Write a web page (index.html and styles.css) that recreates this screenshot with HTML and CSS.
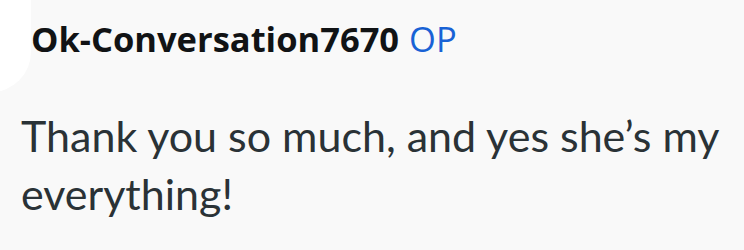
FILE: index.html
```html
<!DOCTYPE html>
<html>
<head><link rel="stylesheet" href="styles.css"></head>
<body>
<div class="comment">
  <div class="avatar"></div>
  <div class="header">
    <span class="author">Ok-Conversation7670</span>
    <span class="op">OP</span>
  </div>
  <p class="body">Thank you so much, and yes she’s my everything!</p>
</div>
</body>
</html>
```
FILE: styles.css
```css
html, body {
  margin: 0;
  background: #f9f9f9;
}
.comment {
  position: relative;
  width: 744px;
  height: 250px;
  overflow: hidden;
}
.avatar {
  position: absolute;
  left: -50px;
  top: -40px;
  width: 81px;
  height: 132px;
  border-radius: 40px;
  background: #ffffff;
}
.header {
  position: relative;
  padding: 15px 0 0 31px;
  font-family: "Open Sans", sans-serif;
  font-weight: 700;
  font-size: 34.5px;
  line-height: normal;
  white-space: nowrap;
}
.author {
  color: #111315;
}
.op {
  color: #1862d5;
  font-weight: 500;
  margin-left: 1px;
}
.body {
  margin: 45px 0 0 0;
  padding: 0 0 0 21px;
  font-family: Lato, sans-serif;
  font-weight: 400;
  font-size: 43px;
  line-height: 58px;
  color: #2a3236;
  width: 710px;
}
```
